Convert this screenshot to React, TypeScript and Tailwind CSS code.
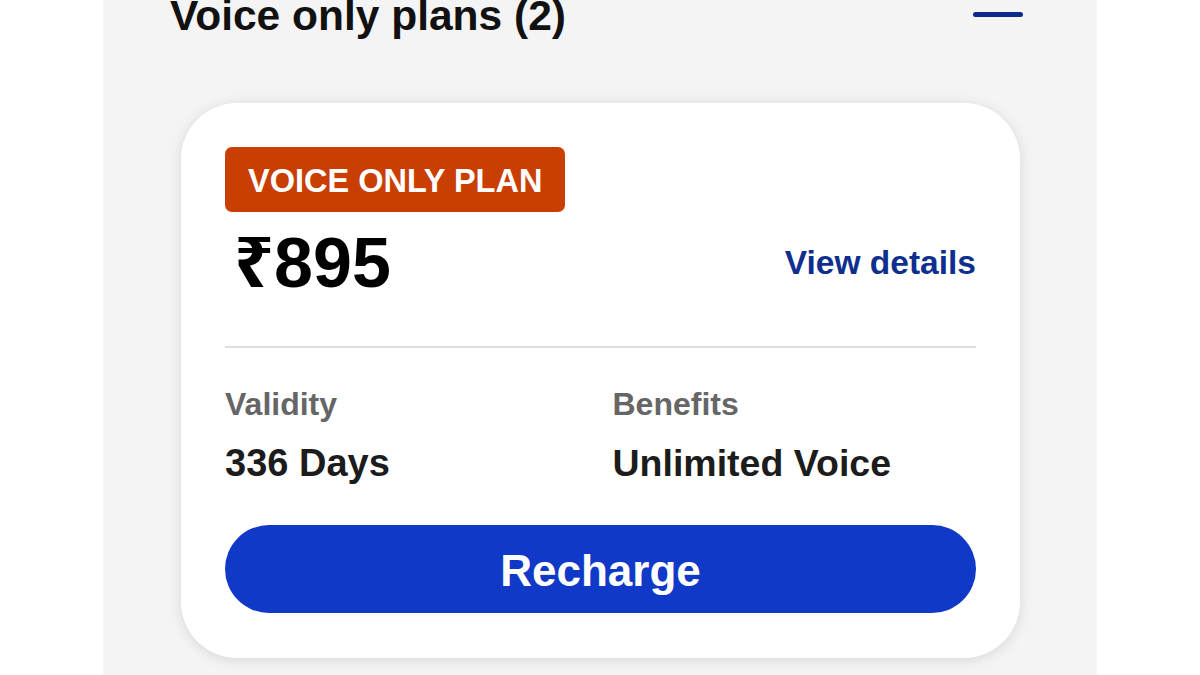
export default function App() {
  return (
    <div className="h-[675px] w-full overflow-hidden bg-white font-['Liberation_Sans','Noto_Sans',sans-serif]">
      <div className="mx-auto h-full w-[994px] bg-[#f4f4f4]">
        <div className="flex items-start justify-between pl-[67px] pr-[74px]">
          <h2 className="mt-[-9px] text-[42.5px] font-bold leading-[50px] text-[#111]">
            Voice only plans (2)
          </h2>
          <div className="mt-[12px] h-[5px] w-[50px] rounded-full bg-[#0d2a8a]" />
        </div>

        <div className="ml-[78px] mt-[62px] w-[839px] rounded-[56px] bg-white px-[44px] pb-[45px] pt-[44px] shadow-[0_2px_14px_rgba(0,0,0,0.12)]">
          <div className="inline-flex h-[65px] items-center rounded-[7px] bg-[#c93e02] px-[23px]">
            <span className="mt-[4px] text-[32.5px] font-bold leading-none text-white">
              VOICE ONLY PLAN
            </span>
          </div>

          <div className="mt-[12px] flex items-center justify-between">
            <span className="ml-[9px] text-[70px] font-bold leading-[78px] text-black">
              ₹895
            </span>
            <a className="text-[33.5px] font-bold leading-[40px] text-[#0f2f8f]">
              View details
            </a>
          </div>

          <div className="mt-[44px] h-[2px] w-full bg-[#dedede]" />

          <div className="mt-[38px] grid grid-cols-2">
            <div className="flex flex-col gap-[19px]">
              <span className="text-[32px] font-bold leading-[36px] text-[#666]">
                Validity
              </span>
              <span className="text-[38px] font-bold leading-[44px] text-[#1c1c1c]">
                336 Days
              </span>
            </div>
            <div className="flex flex-col gap-[19px] pl-[12px]">
              <span className="text-[32px] font-bold leading-[36px] text-[#666]">
                Benefits
              </span>
              <span className="text-[37.5px] font-bold leading-[44px] text-[#1c1c1c]">
                Unlimited Voice
              </span>
            </div>
          </div>

          <button className="mt-[40px] flex h-[88px] w-full items-center justify-center rounded-full bg-[#1039c8]">
            <span className="mt-[4px] text-[44px] font-bold leading-none text-white">
              Recharge
            </span>
          </button>
        </div>
      </div>
    </div>
  );
}
